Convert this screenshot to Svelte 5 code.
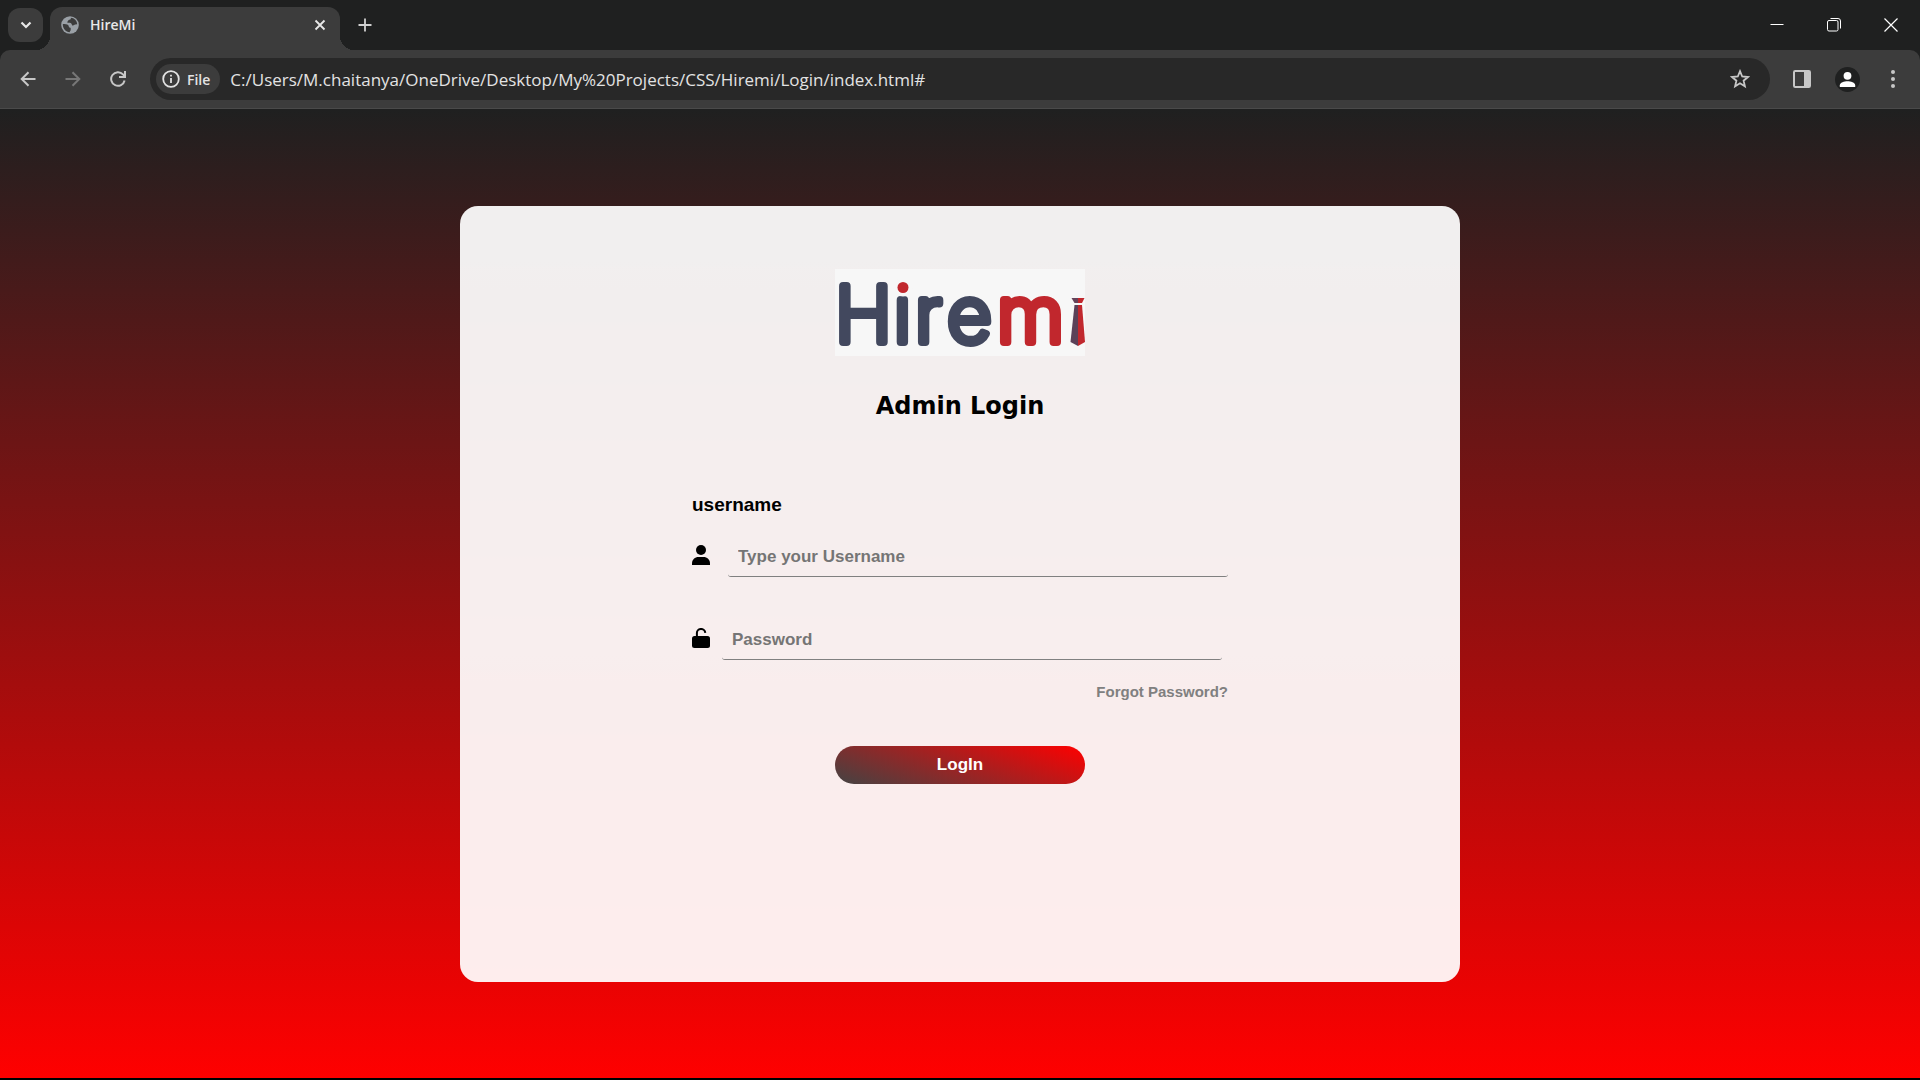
<script>
  let username = $state('');
  let password = $state('');
  let address = $state('C:/Users/M.chaitanya/OneDrive/Desktop/My%20Projects/CSS/Hiremi/Login/index.html#');
</script>

<div class="window">
  <header class="browser">
    <div class="tabstrip">
      <button class="tab-search" aria-label="Search tabs">
        <svg width="12" height="8" viewBox="0 0 12 8"><path d="M1.500 1.500 6 6l4.500-4.500" fill="none" stroke="#e8e8e8" stroke-width="2.200" /></svg>
      </button>
      <div class="tab">
        <svg width="18" height="18" viewBox="0 0 18 18">
          <circle cx="9" cy="9" r="8.800" fill="#9aa0a6" />
          <path d="M1.800 8c2 .1 4.500.2 5.500 1.200.8.9.2 2 1.200 2.300.7.200 1.200.1 1.200.8v1.600c0 .9-.8 1.100-1 2.400C4.800 16 1.700 12.700 1.800 8z" fill="#3c3c3c" />
          <path d="M9.800 1.800c.3 1.300-.2 2-1.500 2-.9 0-.9.8-1.500 1.400-.6.500-.9 1.200.1 1.500 1.300.3 2.600-.2 3.400.7.700.8.500 2 1.500 2.200 1.200.2 1.300-1 2.400-1l2-.3C16.100 4.800 13.300 2 9.800 1.800z" fill="#3c3c3c" />
        </svg>
        <span class="tab-title">HireMi</span>
        <button class="icon" aria-label="Close tab">
          <svg width="12" height="12" viewBox="0 0 12 12"><path d="m1.500 1.500 9 9m0-9-9 9" stroke="#e8e8e8" stroke-width="1.800" /></svg>
        </button>
      </div>
      <button class="icon new-tab" aria-label="New tab">
        <svg width="14" height="14" viewBox="0 0 14 14"><path d="M7 .5v13M.5 7h13" stroke="#d0d0d0" stroke-width="1.800" /></svg>
      </button>
      <div class="controls">
        <button class="icon" aria-label="Minimize">
          <svg width="14" height="14" viewBox="0 0 14 14"><path d="M.5 6.500h13" stroke="#fff" /></svg>
        </button>
        <button class="icon" aria-label="Restore">
          <svg width="14" height="14" viewBox="0 0 14 14" fill="none" stroke="#fff"><rect x=".5" y="2.500" width="10.500" height="10.500" rx="1.500" /><path d="M3.500.5H11A2.500 2.500 0 0 1 13.500 3v7.500" /></svg>
        </button>
        <button class="icon" aria-label="Close window">
          <svg width="14" height="14" viewBox="0 0 14 14"><path d="m.5.5 13 13m0-13-13 13" stroke="#fff" stroke-width="1.200" /></svg>
        </button>
      </div>
    </div>

    <div class="toolbar">
      <nav class="nav">
        <button class="icon" aria-label="Back">
          <svg width="16" height="16" viewBox="0 0 16 16" fill="none" stroke="#c7c7c7" stroke-width="2"><path d="M15.500 8H2M8.500 1.200 1.700 8l6.800 6.800" /></svg>
        </button>
        <button class="icon" aria-label="Forward">
          <svg width="16" height="16" viewBox="0 0 16 16" fill="none" stroke="#777" stroke-width="2"><path d="M.5 8H14M7.500 1.200 14.300 8l-6.800 6.800" /></svg>
        </button>
        <button class="icon" aria-label="Reload">
          <svg width="16" height="16" viewBox="0 0 16 16" fill="none" stroke="#c7c7c7" stroke-width="2"><path d="M14.600 9.500A6.800 6.800 0 1 1 13 3.400l1.500 1.800M15 0v6H9" /></svg>
        </button>
      </nav>
      <div class="omnibox">
        <button class="chip">
          <svg width="18" height="18" viewBox="0 0 18 18"><circle cx="9" cy="9" r="7.800" fill="none" stroke="#e3e3e3" stroke-width="1.800" /><path d="M9 8v5M9 4.800v1.800" stroke="#e3e3e3" stroke-width="1.800" /></svg>
          <span>File</span>
        </button>
        <input class="address" type="text" aria-label="Address" bind:value={address} />
        <button class="icon" aria-label="Bookmark this page">
          <svg width="20" height="20" viewBox="0 0 20 20"><path d="m10 2.200 2.200 5.300 5.700.5-4.300 3.700 1.300 5.600L10 14.300l-4.900 3 1.300-5.600L2.100 8l5.700-.5z" fill="none" stroke="#c7c7c7" stroke-width="1.800" /></svg>
        </button>
      </div>
      <div class="actions">
        <button class="icon" aria-label="Side panel">
          <svg width="18" height="18" viewBox="0 0 18 18"><rect x="1" y="1" width="16" height="16" rx="1.200" fill="none" stroke="#c7c7c7" stroke-width="2" /><path d="M11 1h6v16h-6z" fill="#c7c7c7" /></svg>
        </button>
        <button class="icon" aria-label="Profile">
          <svg width="25" height="25" viewBox="0 0 25 25"><circle cx="12.500" cy="12.500" r="12.500" fill="#1f2020" /><circle cx="12.500" cy="8.800" r="3.900" fill="#fff" /><path d="M4.800 20v-1.800c0-2.600 4.500-4 7.700-4s7.700 1.400 7.700 4V20z" fill="#fff" /></svg>
        </button>
        <button class="icon" aria-label="Menu">
          <svg width="6" height="18" viewBox="0 0 6 18" fill="#c7c7c7"><circle cx="3" cy="2" r="2" /><circle cx="3" cy="9" r="2" /><circle cx="3" cy="16" r="2" /></svg>
        </button>
      </div>
    </div>
  </header>

  <main>
    <section class="card">
      <svg class="logo" width="250" height="87" viewBox="0 0 250 87" role="img" aria-label="Hiremi">
        <rect width="250" height="87" fill="#f7f7f7" />
        <g class="wordmark">
          <text x="0" y="73" dx="0 2 4 7" fill="#42485e" stroke="#42485e">Hire</text>
          <text x="162" y="73" fill="#c1272d" stroke="#c1272d">m</text>
        </g>
        <circle cx="68" cy="18" r="9.500" fill="#f7f7f7" />
        <circle cx="68" cy="18.500" r="5.500" fill="#c1272d" />
        <path d="M236.500 29H243v5h-3.500z" fill="#65435a" />
        <path d="M243 29h6.500l-2.500 5h-4z" fill="#c1272d" />
        <path d="M239.500 36h3.500v41l-7.500-4z" fill="#5b4158" />
        <path d="M243 36h4l3 37-7 4z" fill="#c1272d" />
      </svg>
      <h1>Admin Login</h1>
      <form onsubmit={(e) => e.preventDefault()}>
        <label class="caption" for="username">username</label>
        <div class="field user">
          <svg width="18" height="20" viewBox="0 0 18 20" aria-hidden="true"><circle cx="9" cy="5" r="5" /><path d="M0 20v-1.500c0-4 3-6.500 6.500-6.500h5c3.500 0 6.500 2.500 6.500 6.500V20z" /></svg>
          <input id="username" type="text" placeholder="Type your Username" bind:value={username} />
        </div>
        <div class="field pass">
          <svg width="18" height="20" viewBox="0 0 18 20" aria-hidden="true"><path d="M4.900 9V5.500a4.200 4.200 0 0 1 8.400-.7" fill="none" stroke="#000" stroke-width="2" /><rect y="8" width="18" height="12" rx="2.500" /></svg>
          <input id="password" type="password" placeholder="Password" aria-label="Password" bind:value={password} />
        </div>
        <a class="forgot" href="#forgot">Forgot Password?</a>
        <button class="submit" type="submit">LogIn</button>
      </form>
    </section>
  </main>
</div>

<style>
  :global(body) {
    margin: 0;
  }
  .window {
    display: flex;
    flex-direction: column;
    min-height: 100vh;
    box-sizing: border-box;
    border-bottom: 2px solid #000;
    font-family: 'Liberation Sans', Arial, sans-serif;
  }
  button {
    border: 0;
    padding: 0;
    background: none;
    font: inherit;
    cursor: pointer;
  }
  svg {
    display: block;
    flex: none;
  }
  .icon {
    display: grid;
    place-items: center;
  }

  .browser {
    background: #1f2020;
    font-family: 'Open Sans', 'Noto Sans', sans-serif;
  }
  .tabstrip {
    display: flex;
    align-items: flex-start;
    height: 50px;
  }
  .tab-search {
    display: grid;
    place-items: center;
    width: 35px;
    height: 34px;
    margin: 8px 7px 0 8px;
    border-radius: 12px;
    background: #3c3c3c;
  }
  .tab {
    position: relative;
    display: flex;
    align-items: center;
    gap: 11px;
    box-sizing: border-box;
    width: 290px;
    height: 43px;
    margin-top: 7px;
    padding: 0 14px 7px 11px;
    border-radius: 12px 12px 0 0;
    background: #3c3c3c;
  }
  .tab::before,
  .tab::after {
    content: '';
    position: absolute;
    bottom: 0;
    width: 14px;
    height: 14px;
  }
  .tab::before {
    right: 100%;
    background: radial-gradient(circle at 0 0, transparent 14px, #3c3c3c 14px);
  }
  .tab::after {
    left: 100%;
    background: radial-gradient(circle at 100% 0, transparent 14px, #3c3c3c 14px);
  }
  .tab-title {
    flex: 1;
    color: #e8e8e8;
    font-size: 14px;
    font-weight: 600;
    line-height: 20px;
  }
  .new-tab {
    margin: 18px 0 0 18px;
  }
  .controls {
    display: flex;
    gap: 43px;
    margin: 18px 22px 0 auto;
  }

  .toolbar {
    display: flex;
    align-items: center;
    height: 58px;
    padding: 0 24px 0 20px;
    border-bottom: 1px solid #4a4a4a;
    border-radius: 10px 10px 0 0;
    background: #3c3c3c;
  }
  .nav {
    display: flex;
    gap: 29px;
    margin-right: 24px;
  }
  .omnibox {
    display: flex;
    flex: 1;
    align-items: center;
    box-sizing: border-box;
    height: 42px;
    padding: 0 20px 0 6px;
    border-radius: 21px;
    background: #282828;
  }
  .chip {
    display: flex;
    align-items: center;
    gap: 7px;
    height: 30px;
    padding: 0 10px 0 6px;
    border-radius: 15px;
    background: #3c3c3c;
    color: #e3e3e3;
    font-size: 14px;
    font-weight: 600;
  }
  .address {
    flex: 1;
    min-width: 0;
    padding: 0 10px;
    border: 0;
    outline: 0;
    background: none;
    color: #e3e3e3;
    font-family: 'Open Sans', 'Noto Sans', sans-serif;
    font-size: 17px;
  }
  .actions {
    display: flex;
    align-items: center;
    gap: 30px;
    margin-left: 23px;
  }
  .actions .icon:first-child {
    margin-right: -6px;
  }

  main {
    display: flex;
    flex: 1;
    justify-content: center;
    padding: 97px 24px 96px;
    background: linear-gradient(#1f2020, #f00);
  }
  .card {
    display: flex;
    flex-direction: column;
    align-items: center;
    box-sizing: border-box;
    width: 100%;
    max-width: 1000px;
    padding: 63px 24px 24px;
    border-radius: 18px;
    background: rgba(255, 255, 255, 0.93);
  }
  .logo {
    overflow: visible;
  }
  .wordmark {
    font-family: Inter, sans-serif;
    font-size: 77px;
    font-weight: 200;
    stroke-width: 8;
    stroke-linejoin: round;
  }
  h1 {
    margin: 34px 0 71px;
    font-family: 'DejaVu Sans', Verdana, sans-serif;
    font-size: 24px;
    font-weight: 700;
    line-height: 32px;
  }
  form {
    display: flex;
    flex-direction: column;
    width: 100%;
    max-width: 536px;
  }
  .caption {
    align-self: flex-start;
    font-size: 19px;
    font-weight: 700;
    line-height: 24px;
  }
  .field {
    display: flex;
    align-items: center;
  }
  .field svg {
    margin-bottom: 5px;
  }
  .user {
    gap: 18px;
    margin-top: 20px;
  }
  .pass {
    gap: 12px;
    margin: 43px 6px 0 0;
  }
  .field input {
    flex: 1;
    min-width: 0;
    box-sizing: border-box;
    height: 40px;
    padding: 0 10px;
    border: 0;
    border-bottom: 1px solid gray;
    border-radius: 3px;
    outline: 0;
    background: none;
    font-family: inherit;
    font-size: 17px;
    font-weight: 700;
  }
  .field input::placeholder {
    color: #757575;
    opacity: 1;
  }
  .forgot {
    align-self: flex-end;
    margin-top: 22px;
    color: gray;
    font-size: 15px;
    font-weight: 700;
    line-height: 20px;
    text-decoration: none;
  }
  .submit {
    align-self: center;
    width: 250px;
    height: 38px;
    margin-top: 44px;
    border-radius: 19px;
    background: linear-gradient(20deg, #434343, #f00);
    color: #fff;
    font-size: 17px;
    font-weight: 700;
  }
</style>
